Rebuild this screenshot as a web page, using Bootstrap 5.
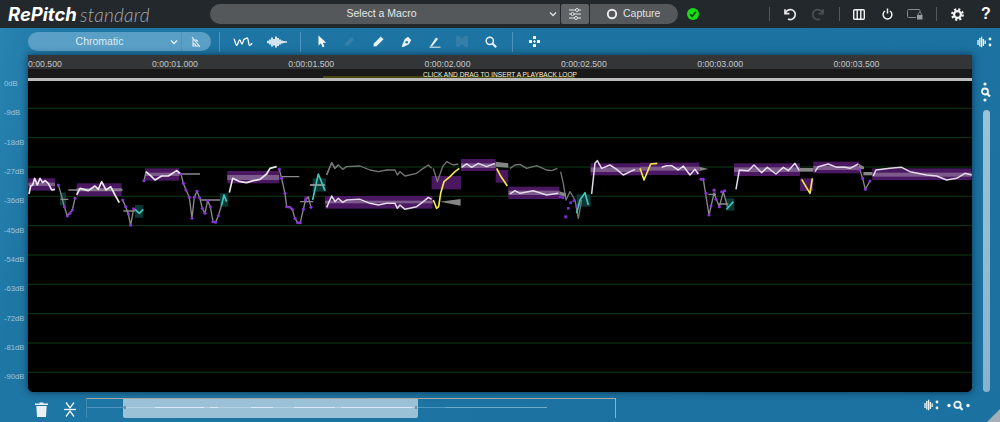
<!DOCTYPE html>
<html lang="en">
<head>
<meta charset="utf-8">
<title>RePitch standard</title>
<link href="https://cdn.jsdelivr.net/npm/bootstrap@5.3.0/dist/css/bootstrap.min.css" rel="stylesheet">
<style>
html,body{height:422px;overflow:hidden;background:#1c6f9d;font-family:"Liberation Sans",Arial,sans-serif}
svg{display:block;flex:none}
.app-shell{width:1000px;height:422px;background:linear-gradient(100deg,#2a85b3 0,#1e76a4 6%,#1b719f 100%)}
.top-bar{height:28px;background:#22282c;color:#fff;padding-left:8px}
.brand-strong{font:italic 700 18.5px/1 Inter,"Liberation Sans",sans-serif;width:72px}
.brand-light{font:italic 300 19px/1 Lato,"Liberation Sans",sans-serif;color:#a4a9ac;letter-spacing:.25px;width:130px}
.macro-pill{width:350px;height:20px;background:#54585b;border-radius:10px 0 0 10px;color:#e4e6e7;font-size:10.5px;padding-right:3px}
.macro-label{padding-left:4px;text-align:center}
.sliders-btn{width:28px;height:20px;background:#606467;margin:0 1px;border-radius:2px}
.capture-pill{width:88px;height:20px;background:#54585b;border-radius:0 10px 10px 0;color:#dfe1e2;font-size:10.5px;padding-left:16px;gap:5px}
.ok-dot{margin-left:9px;margin-right:70px}
.top-sep{width:1px;height:14px;background:#54595c}
.ml12{margin-left:12px}.ml13{margin-left:13px}.ml14{margin-left:14px}.ml15{margin-left:15px}.ml16{margin-left:16px}.ml17{margin-left:17px}.ml18{margin-left:18px}
.tool-bar{height:27px;padding-left:28px}
.mode-pill{width:183px;height:19px;background:#5a9fc6;border-radius:10px;color:#dcedf6;font-size:10.5px;overflow:hidden}
.mode-main{width:154px;border-right:1px solid #5290b6;height:19px;padding-left:12px;padding-right:3px}
.mode-main span{padding-right:11px}
.tool-sep{width:1px;height:20px;background:#4f96bd}
.main-area{height:337px}
.db-gutter{width:28px;padding-top:14px;color:#9cc6dc;font-size:7.6px}
.db-tick{height:29.33px;line-height:29.33px;padding-left:4px;white-space:nowrap}
.plot-box{width:944px;height:337px;background:#000;box-shadow:0 0 7px rgba(0,20,40,.65);border-radius:0 0 5px 5px;overflow:hidden}
.time-ruler{height:14px;background:#333537;color:#c3c5c6;font-size:8.7px;line-height:18px;white-space:nowrap;overflow:hidden}
.time-first{width:124px;flex:none}
.time-cell{width:136.3px;flex:none}
.loop-strip{height:9px;background:linear-gradient(90deg,transparent 295px,#47470f 295px,#47470f 547px,transparent 547px) 0 100%/100% 2px no-repeat #191919;color:#f3f2dc;font-size:6.6px;line-height:12px;text-align:center;overflow:hidden}
.loop-edge{height:3px;background:#bcbcbc}
.side-rail{width:28px}
.zoom-stack{margin-top:27px}
.rail-track{width:7px;height:284px;margin-top:8px;background:linear-gradient(#9dc1d6,#88b3cc);border-radius:4px}
.foot-bar{height:30px;padding-left:35px;padding-top:6px}
.foot-icons{gap:16px;width:51px}
.overview-box{width:530px;height:20px;border-top:1px solid #a8a8a0;border-right:1px solid #b3ad7d;border-left:1px solid #3f88b0}
.overview-wave{height:20px;position:relative;z-index:1}
.overview-sel{width:295px;height:19px;left:36px;background:#9bc1d7;border-radius:0 0 2px 2px}
.foot-right{margin-left:308px;margin-top:1px;gap:8px}
.resize-grip{width:0;height:0;border-left:13px solid transparent;border-bottom:13px solid #a4aeb3;right:0;bottom:0}
</style>
</head>
<body class="m-0">
<div class="app-shell position-relative d-flex flex-column">

<header class="top-bar d-flex align-items-center">
  <span class="brand-strong">RePitch</span>
  <span class="brand-light">standard</span>
  <div class="macro-pill d-flex align-items-center">
    <span class="macro-label flex-grow-1">Select a Macro</span>
    <svg width="8" height="6" viewBox="0 0 8 6"><path d="M1 1.5 4 4.5 7 1.5" fill="none" stroke="#e0e2e3" stroke-width="1.3"/></svg>
  </div>
  <div class="sliders-btn d-flex align-items-center justify-content-center">
    <svg width="14" height="14" viewBox="0 0 14 14" fill="#54585b" stroke="#e6e7e8" stroke-width="1"><path d="M1 3H13M1 7H13M1 11H13"/><circle cx="9" cy="3" r="1.5"/><circle cx="4.5" cy="7" r="1.5"/><circle cx="8" cy="11" r="1.5"/></svg>
  </div>
  <div class="capture-pill d-flex align-items-center">
    <svg width="12" height="12" viewBox="0 0 12 12"><circle cx="6" cy="6" r="4.2" fill="none" stroke="#eceded" stroke-width="1.9"/></svg>
    <span>Capture</span>
  </div>
  <svg class="ok-dot" width="12" height="12" viewBox="0 0 12 12"><circle cx="6" cy="6" r="6" fill="#18dc18"/><path d="M3 6.2 5.2 8.4 9 3.8" fill="none" stroke="#0b3d0b" stroke-width="1.6"/></svg>
  <div class="top-sep"></div>
  <svg class="ml12" width="16" height="16" viewBox="0 0 16 16" fill="none" stroke="#e8e9ea" stroke-width="1.7"><path d="M3 3.2V7.6H7.4"/><path d="M3.4 7.4A5 5 0 1 1 6 13"/></svg>
  <svg class="ml12" width="16" height="16" viewBox="0 0 16 16" fill="none" stroke="#4c5155" stroke-width="1.7"><path d="M13 3.2V7.6H8.6"/><path d="M12.6 7.4A5 5 0 1 0 10 13"/></svg>
  <div class="top-sep ml13"></div>
  <svg class="ml13" width="12" height="11" viewBox="0 0 12 11" fill="none" stroke="#f2f3f3" stroke-width="1.4"><rect x=".7" y=".7" width="10.6" height="9.6" rx="1"/><path d="M4.2 1V10M7.8 1V10"/></svg>
  <svg class="ml17" width="11" height="12" viewBox="0 0 11 12" fill="none" stroke="#f2f3f3" stroke-width="1.5"><path d="M3 3A4.4 4.4 0 1 0 8 3"/><path d="M5.5 .5V5.5"/></svg>
  <svg class="ml14" width="16" height="11" viewBox="0 0 16 11" fill="none" stroke="#858a8d" stroke-width="1"><path d="M9 8.5H1.5A1 1 0 0 1 .5 7.5V1.5A1 1 0 0 1 1.5 .5H12A1 1 0 0 1 13 1.5V4"/><rect x="10" y="6" width="5.5" height="4.5" fill="#9a9ea1" stroke="none"/><path d="M11.2 6V4.7A1.6 1.6 0 0 1 14.3 4.7V6"/></svg>
  <div class="top-sep ml13"></div>
  <svg class="ml14" width="13" height="13" viewBox="0 0 13 13"><circle cx="6.5" cy="6.5" r="3.4" fill="none" stroke="#f2f3f3" stroke-width="2.2"/><circle cx="6.5" cy="6.5" r="5.2" fill="none" stroke="#f2f3f3" stroke-width="2.4" stroke-dasharray="2.1 2"/></svg>
  <span class="ml17 fw-bold fs-6 lh-1 text-white">?</span>
</header>

<section class="tool-bar d-flex align-items-center">
  <div class="mode-pill d-flex align-items-center">
    <div class="mode-main d-flex align-items-center justify-content-between">
      <span class="flex-grow-1 text-center">Chromatic</span>
      <svg width="8" height="6" viewBox="0 0 8 6"><path d="M1 1.5 4 4.5 7 1.5" fill="none" stroke="#e3f0f7" stroke-width="1.3"/></svg>
    </div>
    <svg class="ms-2" width="12" height="12" viewBox="0 0 12 12" fill="none" stroke="#e3f0f7" stroke-width="1.1"><path d="M2 1 10 11M3 3V10H10M3 7.5A3 3 0 0 1 6 10M5.5 3.5 8 5.5"/></svg>
  </div>
  <div class="tool-sep ms-2"></div>
  <svg class="ml13" width="20" height="12" viewBox="0 0 20 12" fill="none" stroke="#fff" stroke-width="1.3" stroke-linejoin="round"><path d="M.7 3C2 3 2.5 9.5 3.7 9.5S5.5 4 6.7 4 8 8 9 8 10.3 3 11.5 3 13 2 14.2 2 15.5 9.5 16.5 9.5 18 7.5 19.3 7.5"/></svg>
  <svg class="ml14" width="20" height="12" viewBox="0 0 20 12" fill="none" stroke="#fff" stroke-width="1.6"><path d="M1 4.7V7.3M3 3.5V8.5M5 1.5V10.5M7 3V9.5M9 .5V11.5M11 2V10M13 3.5V8.5M15 4.5V7.5M17 5V7M19 5.3V6.7"/></svg>
  <div class="tool-sep ml13"></div>
  <svg class="ml17" width="9" height="13" viewBox="0 0 9 13" fill="#fff"><path d="M.5 .5V10.5L3 8.3 4.6 12.3 6.4 11.5 4.9 7.8H8.2Z"/></svg>
  <svg class="ml17" width="11" height="11" viewBox="0 0 11 11" fill="#337fa9"><path d="M7.5.8 10.2 3.5 4.5 9.2 1 10 1.8 6.5Z"/></svg>
  <svg class="ml18" width="11" height="11" viewBox="0 0 11 11" fill="#e8f2f7"><path d="M7.8.5 10.5 3.2 3.5 10.2.5 10.5.8 7.5Z"/></svg>
  <svg class="ml17" width="11" height="12" viewBox="0 0 11 12"><path d="M7 .8 10.2 4 8 8.2 3.4 10.6.8 11.2 1.4 8.6 3.8 3Z" fill="#e8f2f7"/><circle cx="5.7" cy="6.2" r="1.3" fill="#1e76a4"/></svg>
  <svg class="ml17" width="12" height="12" viewBox="0 0 12 12" fill="none" stroke="#e8f2f7"><path d="M1 10.5 7 1.5 9 3 3 10.5Z" fill="#e8f2f7" stroke="none"/><path d="M.5 11.2H11.5"/></svg>
  <svg class="ml15" width="12" height="11" viewBox="0 0 12 11" fill="#337fa9"><path d="M0 0H3L6 3 9 0H12V11H9L6 8 3 11H0Z"/></svg>
  <svg class="ml17" width="12" height="12" viewBox="0 0 12 12" fill="none" stroke="#e8f2f7" stroke-width="1.5"><circle cx="4.8" cy="4.8" r="3.6"/><path d="M7.5 7.5 11.2 11.2" stroke-width="2"/></svg>
  <div class="tool-sep ml15"></div>
  <svg class="ml16" width="11" height="11" viewBox="0 0 11 11" fill="#fff"><rect x="4" y="0" width="3" height="3" rx=".6"/><rect x="4" y="8" width="3" height="3" rx=".6"/><rect x="0" y="4" width="3" height="3" rx=".6"/><rect x="8" y="4" width="3" height="3" rx=".6"/><rect x="4.5" y="4.5" width="2" height="2" transform="rotate(45 5.5 5.5)"/></svg>
  <svg class="ms-auto me-2" width="15" height="12" viewBox="0 0 15 12" fill="none" stroke="#f0f5f8" stroke-width="1.3"><path d="M1 4V9M2.8 2V10.5M4.6 .8V11.2M6.4 3V10M8.2 4.5V8"/><circle cx="13" cy="3" r="1.4" fill="#f0f5f8" stroke="none"/><circle cx="13" cy="9" r="1.4" fill="#f0f5f8" stroke="none"/></svg>
</section>

<main class="main-area d-flex">
  <div class="db-gutter">
    <div class="db-tick">0dB</div><div class="db-tick">-9dB</div><div class="db-tick">-18dB</div><div class="db-tick">-27dB</div><div class="db-tick">-36dB</div><div class="db-tick">-45dB</div><div class="db-tick">-54dB</div><div class="db-tick">-63dB</div><div class="db-tick">-72dB</div><div class="db-tick">-81dB</div><div class="db-tick">-90dB</div>
  </div>
  <div class="plot-box d-flex flex-column">
    <div class="time-ruler d-flex">
      <div class="time-first">0:00.500</div><div class="time-cell">0:00:01.000</div><div class="time-cell">0:00:01.500</div><div class="time-cell">0:00:02.000</div><div class="time-cell">0:00:02.500</div><div class="time-cell">0:00:03.000</div><div class="time-cell">0:00:03.500</div>
    </div>
    <div class="loop-strip">CLICK AND DRAG TO INSERT A PLAYBACK LOOP</div>
    <div class="loop-edge"></div>
    <svg width="944" height="311" viewBox="28 81 944 311">
      <g stroke="#0c3a12" stroke-width="1">
        <path d="M28 108.3H972M28 137.7H972M28 167H972M28 196.3H972M28 225.7H972M28 255H972M28 284.3H972M28 313.7H972M28 343H972M28 372.3H972"/>
      </g>

      <!-- segment 1: x 20..340 -->
      <g transform="translate(20 150) scale(.3333)" fill="none" stroke-linejoin="round">
        <g fill="#4a1860" stroke="none">
          <rect x="25" y="85" width="80" height="37"/><rect x="170" y="100" width="135" height="38"/><rect x="375" y="55" width="103" height="37"/><rect x="622" y="63" width="156" height="37"/><rect x="852" y="138" width="10" height="20"/>
        </g>
        <g fill="#7d5a8c" stroke="none">
          <rect x="25" y="98" width="80" height="10"/><rect x="170" y="114" width="135" height="10"/><rect x="375" y="68" width="103" height="10"/><rect x="622" y="75" width="156" height="15"/>
        </g>
        <g fill="#0c3634" stroke="none">
          <rect x="120" y="128" width="18" height="38"/><rect x="345" y="165" width="25" height="38"/><rect x="600" y="130" width="25" height="40"/><rect x="878" y="85" width="40" height="40"/>
        </g>
        <g stroke="#8a8a8a" stroke-width="4">
          <path d="M115 105 122 128 133 170 142 198 157 180 165 145"/><path d="M122 148H145M145 120H308M310 183H345"/>
          <path d="M308 150 317 170 325 192 332 226 341 176"/>
          <path d="M372 92 378 65M483 72 490 100 498 120 508 142 516 205 523 142 531 124 539 143 547 175 555 190 563 152 571 170 579 215 587 217 595 197 605 165"/>
          <path d="M485 72H540M540 150H600M785 80H838M840 155H880"/>
          <path d="M778 58 785 85 795 130 800 170 810 172 817 178 825 205 833 218 841 218 850 178 857 150 865 140 873 172"/>
          <path d="M920 75 935 38 945 55 955 45"/>
        </g>
        <g stroke="#ece8ee" stroke-width="5">
          <path d="M27 132 32 108 38 105 44 85 52 105 60 85 68 98 75 92 85 100 95 120 105 118"/>
          <path d="M170 135 180 115 205 122 225 108 235 118 245 95 258 120 272 110 285 135 298 158"/>
          <path d="M378 65 395 80 405 90 425 78 445 78 470 62 482 72"/>
          <path d="M628 128 638 85 660 95 680 98 700 92 720 88 740 72 750 55 770 50"/>
        </g>
        <path d="M870 105H915" stroke="#8a8a8a" stroke-width="6"/>
        <g stroke="#3fc6b8" stroke-width="5">
          <path d="M345 178 358 190 370 178"/><path d="M605 165 612 135 620 155"/><path d="M878 150 895 72 915 122"/>
        </g>
        <g fill="#8a35d8" stroke="none">
          <circle cx="115" cy="105" r="4.6"/><circle cx="133" cy="170" r="4.6"/><circle cx="142" cy="198" r="4.6"/><circle cx="150" cy="190" r="4.6"/><circle cx="157" cy="180" r="4.6"/><circle cx="165" cy="145" r="4.6"/><circle cx="308" cy="150" r="4.6"/><circle cx="317" cy="170" r="4.6"/><circle cx="325" cy="192" r="4.6"/><circle cx="332" cy="226" r="4.6"/><circle cx="341" cy="176" r="4.6"/><circle cx="372" cy="92" r="4.6"/><circle cx="483" cy="72" r="4.6"/><circle cx="490" cy="100" r="4.6"/><circle cx="498" cy="120" r="4.6"/><circle cx="508" cy="142" r="4.6"/><circle cx="516" cy="205" r="4.6"/><circle cx="523" cy="142" r="4.6"/><circle cx="531" cy="124" r="4.6"/><circle cx="539" cy="143" r="4.6"/><circle cx="547" cy="175" r="4.6"/><circle cx="555" cy="190" r="4.6"/><circle cx="563" cy="152" r="4.6"/><circle cx="571" cy="170" r="4.6"/><circle cx="579" cy="215" r="4.6"/><circle cx="587" cy="217" r="4.6"/><circle cx="595" cy="197" r="4.6"/><circle cx="778" cy="58" r="4.6"/><circle cx="785" cy="85" r="4.6"/><circle cx="795" cy="130" r="4.6"/><circle cx="800" cy="170" r="4.6"/><circle cx="810" cy="172" r="4.6"/><circle cx="817" cy="178" r="4.6"/><circle cx="825" cy="205" r="4.6"/><circle cx="833" cy="218" r="4.6"/><circle cx="841" cy="218" r="4.6"/><circle cx="850" cy="178" r="4.6"/><circle cx="857" cy="150" r="4.6"/><circle cx="873" cy="172" r="4.6"/>
        </g>
      </g>

      <!-- segment 2: x 320..640 -->
      <g transform="translate(320 150) scale(.3333)" fill="none" stroke-linejoin="round">
        <g fill="#4a1860" stroke="none">
          <rect x="15" y="138" width="323" height="38"/><rect x="335" y="78" width="88" height="40"/><rect x="423" y="27" width="104" height="36"/><rect x="527" y="60" width="38" height="38"/><rect x="565" y="110" width="153" height="37"/><rect x="812" y="40" width="148" height="36"/>
        </g>
        <g fill="#7d5a8c" stroke="none">
          <rect x="15" y="152" width="323" height="8"/><rect x="423" y="40" width="104" height="14"/><rect x="565" y="122" width="153" height="13"/><rect x="812" y="52" width="148" height="14"/>
        </g>
        <rect x="770" y="133" width="42" height="37" fill="#0c3634"/>
        <g stroke="#757575" stroke-width="4">
          <path d="M20 75 35 38 45 55 55 45 68 58 80 50 120 48 150 60 175 65 200 60 225 60 232 75 240 65 255 78 290 70 310 55 325 45 335 55"/>
          <path d="M340 55 352 95 368 50 380 35 400 45 415 42"/>
          <path d="M570 55 585 45 600 43 620 55 650 47 680 60 695 62 712 55"/>
          <path d="M722 65 730 100 738 150 750 125 765 150 775 205 785 150"/>
        </g>
        <g fill="#858585" stroke="none">
          <path d="M360 155 422 147V167Z"/><path d="M527 35 565 40V53L527 50Z"/><path d="M718 124 738 130V140L718 136Z"/>
        </g>
        <g stroke="#e4dbe8" stroke-width="4.5">
          <path d="M20 172 35 138 45 155 55 145 68 157 80 150 120 148 150 160 175 165 200 160 225 160 232 175 240 165 255 178 290 170 310 155 325 142 335 148"/>
          <path d="M425 52 440 42 455 52 475 40 500 50 525 40"/>
          <path d="M570 132 585 122 600 130 640 122 680 135 715 130"/>
          <path d="M815 132 825 40 832 32 845 55 870 45 890 58 910 75 945 58"/>
        </g>
        <g stroke="#f2e74a" stroke-width="5">
          <path d="M340 150 350 175 356 170 362 130 372 95 390 80 405 65 418 55"/>
          <path d="M530 55 540 75 562 108"/>
        </g>
        <path d="M770 190 780 150 795 128 805 165" stroke="#3fc6b8" stroke-width="5"/>
        <g fill="#7a2fd0" stroke="none">
          <rect x="717" y="137" width="8" height="8"/><rect x="725" y="139" width="8" height="8"/><rect x="748" y="154" width="8" height="8"/><rect x="758" y="148" width="8" height="8"/><rect x="741" y="171" width="8" height="8"/><rect x="766" y="164" width="8" height="8"/><rect x="733" y="196" width="9" height="9"/>
        </g>
      </g>

      <!-- segment 3: x 640..980 -->
      <g transform="translate(640 150) scale(.3333)" fill="none" stroke-linejoin="round">
        <g fill="#4a1860" stroke="none">
          <rect x="0" y="38" width="178" height="37"/><rect x="282" y="40" width="198" height="38"/><rect x="480" y="85" width="40" height="38"/><rect x="520" y="35" width="137" height="35"/><rect x="697" y="55" width="298" height="35"/><rect x="218" y="118" width="10" height="20"/>
        </g>
        <g fill="#7d5a8c" stroke="none">
          <rect x="0" y="50" width="178" height="12"/><rect x="282" y="52" width="198" height="14"/><rect x="520" y="48" width="137" height="12"/><rect x="697" y="68" width="298" height="12"/>
        </g>
        <rect x="258" y="145" width="25" height="37" fill="#0c3634"/>
        <g fill="#858585" stroke="none">
          <path d="M178 50 205 57 178 63Z"/><rect x="480" y="54" width="40" height="11"/><path d="M657 42 672 50V58L657 56Z"/><rect x="670" y="66" width="27" height="10"/>
        </g>
        <g stroke="#8a8a8a" stroke-width="4">
          <path d="M190 88 207 195 222 130 238 170 250 125 262 170"/><path d="M205 133H228M235 162H265"/>
          <path d="M660 60 668 85 676 118 690 93"/>
        </g>
        <g stroke="#e4dbe8" stroke-width="4.5">
          <path d="M65 52 80 47 95 47 115 60 130 48 150 75 165 58 175 72"/>
          <path d="M288 118 298 60 325 62 342 45 365 68 382 52 408 72 430 52 445 62 465 40 478 62"/>
          <path d="M525 65 535 50 565 42 590 52 615 52 630 55 655 42"/>
          <path d="M700 78 708 60 750 55 785 52 810 65 860 75 890 78 920 90 950 85 975 70 995 75"/>
        </g>
        <g stroke="#f2e74a" stroke-width="5">
          <path d="M0 55 12 90 32 42 52 40"/><path d="M485 88 510 130 517 85"/>
        </g>
        <path d="M260 178 280 155" stroke="#3fc6b8" stroke-width="5"/>
        <g fill="#8a35d8" stroke="none">
          <circle cx="183" cy="88" r="4.6"/><circle cx="190" cy="88" r="4.6"/><circle cx="198" cy="130" r="4.6"/><circle cx="207" cy="195" r="4.6"/><circle cx="213" cy="168" r="4.6"/><circle cx="222" cy="120" r="4.6"/><circle cx="228" cy="148" r="4.6"/><circle cx="238" cy="170" r="4.6"/><circle cx="245" cy="125" r="4.6"/><circle cx="254" cy="122" r="4.6"/><circle cx="660" cy="60" r="4.6"/><circle cx="668" cy="85" r="4.6"/><circle cx="676" cy="118" r="4.6"/><circle cx="690" cy="93" r="4.6"/>
        </g>
      </g>
    </svg>
  </div>
  <aside class="side-rail d-flex flex-column align-items-center">
    <svg class="zoom-stack" width="12" height="20" viewBox="0 0 12 20" fill="#f2f6f9"><circle cx="5" cy="2" r="1.6"/><circle cx="5" cy="18" r="1.6"/><circle cx="5" cy="9.5" r="3" fill="none" stroke="#f2f6f9" stroke-width="1.8"/><path d="M7 11.5 10 14.5" stroke="#f2f6f9" stroke-width="2.2"/></svg>
    <div class="rail-track"></div>
  </aside>
</main>

<footer class="foot-bar d-flex align-items-start">
  <div class="foot-icons d-flex">
    <svg class="mt-1" width="13" height="15" viewBox="0 0 13 15" fill="#e9eff3"><path d="M0 1.5H4.5V.5H8.5V1.5H13V3H0ZM1.3 4H11.7L11 15H2Z"/></svg>
    <svg class="mt-1" width="12" height="15" viewBox="0 0 12 15" fill="none" stroke="#f0f4f7" stroke-width="1.3"><path d="M0 7.5H12"/><path d="M2 .5 6 6 10 .5M2 14.5 6 9 10 14.5"/></svg>
  </div>
  <div class="overview-box position-relative">
    <div class="overview-sel position-absolute top-0"></div>
    <svg class="overview-wave" width="529" height="20" viewBox="0 0 529 20">
      <path d="M0 8.5H460" stroke="#4f97bf" stroke-width="1"/>
      <path d="M37 8.5H331" stroke="#b7d3e3" stroke-width="1"/>
      <path d="M68 8.5H117M123 8.5H131M164 8.5H186M207 8.5H248M254 8.5H325" stroke="#dcebf3" stroke-width="1"/>
      <path d="M358 8.5H460" stroke="#6caccd" stroke-width="1"/>
      <path d="M38 7V10M329 7V10" stroke="#6f8c9d" stroke-width="2"/>
    </svg>
  </div>
  <div class="foot-right d-flex align-items-center">
    <svg width="15" height="12" viewBox="0 0 15 12" fill="none" stroke="#f0f5f8" stroke-width="1.3"><path d="M1 4V9M2.8 2V10.5M4.6 .8V11.2M6.4 3V10M8.2 4.5V8"/><circle cx="13" cy="3" r="1.4" fill="#f0f5f8" stroke="none"/><circle cx="13" cy="9" r="1.4" fill="#f0f5f8" stroke="none"/></svg>
    <svg width="23" height="11" viewBox="0 0 23 11" fill="#f2f6f9"><circle cx="2" cy="5.5" r="1.7"/><circle cx="21" cy="5.5" r="1.7"/><circle cx="10.5" cy="4.8" r="3.2" fill="none" stroke="#f2f6f9" stroke-width="1.8"/><path d="M13 7 15.5 10" stroke="#f2f6f9" stroke-width="2"/></svg>
  </div>
</footer>
<div class="resize-grip position-absolute"></div>
</div>
<script src="https://cdn.jsdelivr.net/npm/bootstrap@5.3.0/dist/js/bootstrap.bundle.min.js"></script>
</body>
</html>
